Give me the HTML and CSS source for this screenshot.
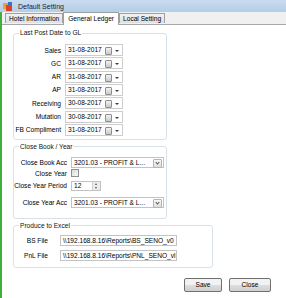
FILE: index.html
```html
<!DOCTYPE html>
<html lang="en">
<head>
    <meta charset="UTF-8">
    <title>Default Setting</title>
    <link rel="stylesheet" href="styles.css">
</head>
<body>
    <div class="window">
        <div class="titlebar">
            <svg class="app-icon" width="10" height="9" viewBox="0 0 10 9">
                <rect x="0" y="1" width="6" height="6" fill="#e8a23a"/>
                <rect x="3" y="3" width="6" height="6" fill="#d9412b"/>
                <rect x="5" y="0" width="4" height="3" fill="#3a6fc4"/>
            </svg>
            <span class="title">Default Setting</span>
        </div>
        <div class="frame">
            <div class="tabs">
                <span class="tab">Hotel Information</span>
                <span class="tab active">General Ledger</span>
                <span class="tab">Local Setting</span>
            </div>
            <div class="page">
                <fieldset class="group group-post">
                    <legend>Last Post Date to GL</legend>
                    <div class="post-rows">
                        <label>Sales</label>
                        <div class="date">31-08-2017<span class="cal"></span><span class="drop"></span></div>
                        <label>GC</label>
                        <div class="date">31-08-2017<span class="cal"></span><span class="drop"></span></div>
                        <label>AR</label>
                        <div class="date">31-08-2017<span class="cal"></span><span class="drop"></span></div>
                        <label>AP</label>
                        <div class="date">31-08-2017<span class="cal"></span><span class="drop"></span></div>
                        <label>Receiving</label>
                        <div class="date">30-08-2017<span class="cal"></span><span class="drop"></span></div>
                        <label>Mutation</label>
                        <div class="date">30-08-2017<span class="cal"></span><span class="drop"></span></div>
                        <label>FB Compliment</label>
                        <div class="date">31-08-2017<span class="cal"></span><span class="drop"></span></div>
                    </div>
                </fieldset>

                <fieldset class="group group-close">
                    <legend>Close Book / Year</legend>
                    <div class="close-row row-combo">
                        <label>Close Book Acc</label>
                        <div class="combo">3201.03 - PROFIT &amp; L...<span class="combo-btn"></span></div>
                    </div>
                    <div class="close-row row-check">
                        <label>Close Year</label>
                        <span class="check"></span>
                    </div>
                    <div class="close-row row-num">
                        <label>Close Year Period</label>
                        <div class="num">12<span class="spin"><i class="up"></i><i class="down"></i></span></div>
                    </div>
                    <div class="close-row row-combo2">
                        <label>Close Year Acc</label>
                        <div class="combo">3201.03 - PROFIT &amp; L...<span class="combo-btn"></span></div>
                    </div>
                </fieldset>

                <fieldset class="group group-excel">
                    <legend>Produce to Excel</legend>
                    <div class="file-row">
                        <label>BS File</label>
                        <div class="textbox">\\192.168.8.16\Reports\BS_SENO_v0</div>
                    </div>
                    <div class="file-row">
                        <label>PnL File</label>
                        <div class="textbox">\\192.168.8.16\Reports\PNL_SENO_vl</div>
                    </div>
                </fieldset>

                <div class="buttons">
                    <button class="btn-save">Save</button>
                    <button class="btn-close">Close</button>
                </div>
            </div>
        </div>
    </div>
</body>
</html>
```

FILE: styles.css
```css
body {
    margin: 0;
    font-family: "Liberation Sans", Arial, sans-serif;
    font-size: 6.6px;
    color: #000;
}
.window {
    width: 286px;
    height: 298px;
    background: #fff;
    overflow: hidden;
}
.titlebar {
    height: 12px;
    background: linear-gradient(#c9dcf1, #b5cce8);
    display: flex;
    align-items: center;
}
.app-icon {
    margin-left: 3px;
    margin-right: 5px;
}
.title {
    font-size: 7px;
    color: #1e1e1e;
}
.frame {
    border-left: 2px solid #3fae3a;
    height: 286px;
    box-sizing: border-box;
}
.tabs {
    height: 13px;
    background: #f0f0f0;
    border-bottom: 1px solid #a8a8a8;
    box-sizing: border-box;
    display: flex;
    align-items: flex-end;
    padding-left: 3px;
}
.tab {
    height: 10px;
    line-height: 9px;
    padding: 0 3px;
    border: 1px solid #a0a0a0;
    border-bottom: none;
    background: linear-gradient(#f2f2f2, #e0e0e0);
    box-sizing: border-box;
    margin-bottom: 1px;
}
.tab.active {
    height: 13px;
    line-height: 11px;
    background: #fff;
    padding: 0 4px;
    margin-bottom: -1px;
    position: relative;
}
.page {
    padding-top: 4px;
}
.group {
    margin: 0 0 0 11px;
    padding: 0;
    border: 1px solid #d8e1e8;
    border-radius: 3px;
    box-sizing: border-box;
    width: 154px;
}
.group legend {
    line-height: 8px;
    padding: 0 1px;
    margin-left: 5px;
    color: #111;
}
label {
    text-align: right;
    white-space: nowrap;
}

/* last post date */
.post-rows {
    display: grid;
    grid-template-columns: 47px 58px;
    column-gap: 4px;
    row-gap: 1.33px;
    padding: 7px 0 3px 0;
    align-items: center;
}
.date {
    height: 12px;
    line-height: 10px;
    border: 1px solid #cdcdcd;
    box-sizing: border-box;
    padding-left: 2px;
    position: relative;
}
.cal {
    position: absolute;
    right: 10px;
    top: 2px;
    width: 5px;
    height: 6px;
    border: 1px solid #8e8e8e;
    border-radius: 1px;
    background: linear-gradient(#f4f4f4, #c9c9c9);
}
.drop {
    position: absolute;
    right: 3px;
    top: 5px;
    border-left: 2px solid transparent;
    border-right: 2px solid transparent;
    border-top: 2px solid #333c5c;
}

/* close book */
.group-close {
    margin-top: 3px;
    padding: 6px 0 10px 0;
}
.close-row {
    display: flex;
    align-items: center;
}
.close-row label {
    width: 53px;
    margin-right: 4px;
    flex-shrink: 0;
}
.row-check {
    margin-top: 1px;
    height: 9px;
}
.row-num {
    margin-top: 3px;
}
.row-combo2 {
    margin-top: 6px;
}
.combo {
    width: 93px;
    height: 11px;
    line-height: 9px;
    border: 1px solid #c3c3c3;
    box-sizing: border-box;
    padding-left: 2px;
    position: relative;
}
.combo-btn {
    position: absolute;
    right: 1px;
    top: 1px;
    width: 7px;
    height: 7px;
    border: 1px solid #b4b4b4;
    border-radius: 1px;
    background: linear-gradient(#f8f8f8, #dedede);
}
.combo-btn::after {
    content: "";
    position: absolute;
    left: 2px;
    top: 1px;
    width: 2px;
    height: 2px;
    border-right: 1px solid #555;
    border-bottom: 1px solid #555;
    transform: rotate(45deg);
}
.check {
    width: 8px;
    height: 8px;
    border: 1px solid #8f8f8f;
    box-sizing: border-box;
    background: linear-gradient(135deg, #dcdcdc, #fafafa);
}
.num {
    width: 30px;
    height: 10px;
    line-height: 8px;
    border: 1px solid #c3c3c3;
    box-sizing: border-box;
    padding-left: 2px;
    position: relative;
}
.spin {
    position: absolute;
    right: 0;
    top: 0;
    width: 7px;
    height: 8px;
    background: #ececec;
    border-left: 1px solid #d0d0d0;
}
.spin i {
    position: absolute;
    left: 2px;
    border-left: 1.5px solid transparent;
    border-right: 1.5px solid transparent;
}
.spin .up {
    top: 1px;
    border-bottom: 2px solid #555;
}
.spin .down {
    top: 5px;
    border-top: 2px solid #555;
}

/* produce to excel */
.group-excel {
    width: 200px;
    margin-top: 3px;
    padding: 5px 0 6px 0;
}
.file-row {
    display: flex;
    align-items: center;
    margin-bottom: 4px;
}
.file-row:last-child {
    margin-bottom: 0;
}
.file-row label {
    width: 34px;
    margin-right: 12px;
}
.textbox {
    width: 117px;
    height: 11px;
    line-height: 9px;
    border: 1px solid #c3c3c3;
    box-sizing: border-box;
    padding-left: 2px;
    white-space: nowrap;
    overflow: hidden;
}

.buttons {
    display: flex;
    justify-content: flex-end;
    gap: 7px;
    margin-top: 10px;
    padding-right: 15px;
}
button {
    height: 14px;
    font-family: inherit;
    font-size: 6.6px;
    padding: 0;
    border: 1px solid #707070;
    border-radius: 2px;
    background: linear-gradient(#f2f2f2 45%, #dcdcdc 55%, #cfcfcf);
    color: #000;
}
.btn-save {
    width: 38px;
}
.btn-close {
    width: 42px;
}
```
